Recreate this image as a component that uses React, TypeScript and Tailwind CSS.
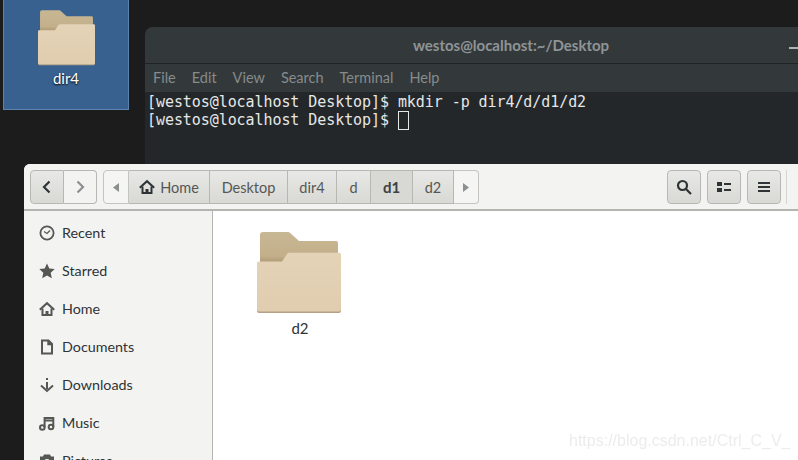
import { ReactNode } from 'react';

const MENU = ['File', 'Edit', 'View', 'Search', 'Terminal', 'Help'];

function Folder({ className }: { className: string }) {
  return (
    <svg viewBox="0 0 84 82" className={className}>
      <defs>
        <linearGradient id="back" x1="0" y1="0" x2="0" y2="1">
          <stop offset="0" stopColor="#c8b793" />
          <stop offset="0.75" stopColor="#c3b08b" />
          <stop offset="1" stopColor="#a8946f" />
        </linearGradient>
        <linearGradient id="front" x1="0" y1="0" x2="0" y2="1">
          <stop offset="0" stopColor="#e5d3b7" />
          <stop offset="1" stopColor="#e0cdb0" />
        </linearGradient>
      </defs>
      <path d="M3 3a3 3 0 0 1 3-3h25a3 3 0 0 1 2.200 1L42 9h37a2 2 0 0 1 2 2V32H3z" fill="url(#back)" />
      <path d="M2 81a2 2 0 0 1-2-2V32a2 2 0 0 1 2-2h23l4.500-7a3 3 0 0 1 2.500-1.500h50a2 2 0 0 1 2 2V79a2 2 0 0 1-2 2z" fill="#b3a285" />
      <path d="M2 79.500a2 2 0 0 1-2-2V31.500a2 2 0 0 1 2-2h23L30 22a3 3 0 0 1 2.500-1.300h49.500a2 2 0 0 1 2 2V77.500a2 2 0 0 1-2 2z" fill="url(#front)" />
    </svg>
  );
}

function Btn({ className, children }: { className: string; children: ReactNode }) {
  return <div className={`flex items-center justify-center h-[34px] border border-[#b8b8b3] bg-gradient-to-b from-[#e8e8e6] to-[#d8d8d5] text-[14.500px] text-[#2e3436] ${className}`}>{children}</div>;
}

function HomeIcon({ color }: { color: string }) {
  return (
    <svg viewBox="0 0 16 16" className="w-4 h-4" fill="none" stroke={color} strokeWidth="2">
      <path d="M0.800 8.800 8 2.200l7.200 6.600" />
      <path d="M3.500 7.500V14H12.500V7.500" />
      <path d="M6.500 14V10H9.500V14z" fill={color} strokeWidth="0" />
    </svg>
  );
}

const PLACES: { name: string; icon: ReactNode }[] = [
  {
    name: 'Recent',
    icon: (
      <svg viewBox="0 0 16 16" className="w-4 h-4" fill="none" stroke="#555753" strokeWidth="1.800">
        <circle cx="8" cy="8" r="6.600" />
        <path d="M5 6.500l3 2 3-3" strokeWidth="1.200" />
      </svg>
    ),
  },
  {
    name: 'Starred',
    icon: (
      <svg viewBox="0 0 16 16" className="w-4 h-4" fill="#555753">
        <path d="M8 .5l2.300 4.900 5.400.7-4 3.700 1.100 5.400L8 12.600l-4.800 2.600 1.100-5.400-4-3.700 5.400-.7z" />
      </svg>
    ),
  },
  { name: 'Home', icon: <HomeIcon color="#555753" /> },
  {
    name: 'Documents',
    icon: (
      <svg viewBox="0 0 16 16" className="w-4 h-4" fill="none" stroke="#555753" strokeWidth="2">
        <path d="M3 1.500h6.500L13 5v9.500H3z" />
        <path d="M9 1.500V5.500h4" fill="#555753" strokeWidth="1.400" />
      </svg>
    ),
  },
  {
    name: 'Downloads',
    icon: (
      <svg viewBox="0 0 16 16" className="w-4 h-4" fill="none" stroke="#555753" strokeWidth="2">
        <path d="M8 1v2M8 5v7" />
        <path d="M2 8.500 8 14l6-5.500" />
      </svg>
    ),
  },
  {
    name: 'Music',
    icon: (
      <svg viewBox="0 0 16 16" className="w-4 h-4" fill="none" stroke="#555753" strokeWidth="2">
        <circle cx="3.300" cy="12.500" r="2.300" />
        <circle cx="12" cy="12" r="2.300" />
        <path d="M5.600 12.500V3H14.300V12M5.600 5.500H14.300" />
      </svg>
    ),
  },
  {
    name: 'Pictures',
    icon: (
      <svg viewBox="0 0 16 16" className="w-4 h-4" fill="#555753">
        <path fillRule="evenodd" d="M5 1.500h6l1 2h3v11H1v-11h3zM8 6a3 3 0 1 0 0 6 3 3 0 0 0 0-6z" />
      </svg>
    ),
  },
];

export default function App() {
  return (
    <div className="relative w-[798px] h-[460px] overflow-hidden bg-[#1c1c1d] font-['Lato',sans-serif]">
      {/* desktop icon */}
      <div className="absolute left-[3px] top-[-1px] w-[126px] h-[111px] flex flex-col items-center bg-[#38618f] border border-[#5b83ad]">
        <Folder className="w-[57px] h-[56px] mt-[10px]" />
        <span className="mt-[2px] text-[15px] leading-5 text-white [text-shadow:0_1px_2px_#000]">dir4</span>
      </div>

      {/* terminal */}
      <div className="absolute left-[145px] top-[27px] w-[732px] h-[150px] flex flex-col rounded-t-lg bg-[#232729] overflow-hidden">
        <div className="relative h-[37px] flex items-center justify-center shrink-0 bg-[#33393b] border-b border-[#1f2324]">
          <span className="text-[15px] font-bold text-[#8f9496]">westos@localhost:~/Desktop</span>
          <span className="absolute left-[644px] top-[20px] w-[9px] h-[2px] bg-[#b0b3b4]" />
        </div>
        <div className="h-[28px] flex items-center gap-[16px] pl-[8px] shrink-0 bg-[#33393b] text-[14.500px] text-[#868b8c]">
          {MENU.map(m => <span key={m}>{m}</span>)}
        </div>
        <div className="pl-[2px] pt-[1px] font-['DejaVu_Sans_Mono',monospace] text-[15px] tracking-[-0.07px] leading-[18px] text-[#e6e8e8] whitespace-pre">
          <div>[westos@localhost Desktop]$ mkdir -p dir4/d/d1/d2</div>
          <div className="flex">
            <span>[westos@localhost Desktop]$ </span>
            <span className="w-[11px] h-[19px] border border-[#e6e8e8]" />
          </div>
        </div>
      </div>

      {/* files window */}
      <div className="absolute left-[24px] top-[164px] w-[780px] h-[300px] flex flex-col rounded-t-md overflow-hidden bg-white">
        <div className="h-[47px] shrink-0 flex items-center pl-[6px] pt-px bg-[#f3f3f2] border-b-2 border-[#b4b4b0]">
          <Btn className="w-[34px] rounded-l-[4px]">
            <svg viewBox="0 0 16 16" className="w-4 h-4" fill="none" stroke="#2e3436" strokeWidth="2.200"><path d="M10.500 2.500 5 8l5.500 5.500" /></svg>
          </Btn>
          <div className="w-[33px] h-[34px] flex items-center justify-center border border-l-0 border-[#b8b8b3] rounded-r-[4px] bg-[#f3f3f2]">
            <svg viewBox="0 0 16 16" className="w-4 h-4" fill="none" stroke="#8c8f90" strokeWidth="2.200"><path d="M5.500 2.500 11 8l-5.500 5.500" /></svg>
          </div>

          <div className="ml-[6px] w-[26px] h-[34px] flex items-center justify-center border border-[#c4c4c0] rounded-l-[4px] bg-[#f5f5f4]">
            <svg viewBox="0 0 8 12" className="w-[6px] h-[9px]" fill="#8c8f90"><path d="M8 0v12L0 6z" /></svg>
          </div>
          <Btn className="w-[81px] border-l-0 gap-[5px]">
            <HomeIcon color="#2e3436" />
            <span className="pt-px text-[#555753]">Home</span>
          </Btn>
          <Btn className="w-[78px] border-l-0"><span className="pt-px text-[#555753]">Desktop</span></Btn>
          <Btn className="w-[49px] border-l-0"><span className="pt-px text-[#555753]">dir4</span></Btn>
          <Btn className="w-[34px] border-l-0"><span className="pt-px text-[#555753]">d</span></Btn>
          <div className="w-[42px] h-[34px] flex items-center justify-center border border-l-0 border-[#b8b8b3] bg-[#d8d8d5] text-[15px] font-bold text-[#3c4143]">d1</div>
          <Btn className="w-[41px] border-l-0"><span className="pt-px text-[#555753]">d2</span></Btn>
          <div className="w-[25px] h-[34px] flex items-center justify-center border border-l-0 border-[#c4c4c0] rounded-r-[4px] bg-[#f5f5f4]">
            <svg viewBox="0 0 8 12" className="w-[6px] h-[9px]" fill="#8c8f90"><path d="M0 0v12l8-6z" /></svg>
          </div>

          <div className="flex-1" />
          <Btn className="w-[34px] rounded-[4px]">
            <svg viewBox="0 0 16 16" className="w-4 h-4" fill="none" stroke="#2e3436" strokeWidth="2.200"><circle cx="6.500" cy="6.500" r="4.500" /><path d="M10 10l5 5" /></svg>
          </Btn>
          <Btn className="ml-[6px] w-[34px] rounded-[4px]">
            <svg viewBox="0 0 16 16" className="w-4 h-4" fill="#2e3436"><path d="M1 3h5v4H1zM1 9h5v4H1zM8 4h7v2H8zM8 10h7v2H8z" /></svg>
          </Btn>
          <Btn className="ml-[6px] w-[34px] rounded-[4px]">
            <svg viewBox="0 0 16 16" className="w-4 h-4" fill="#2e3436"><path d="M2 3h12v2H2zM2 7h12v2H2zM2 11h12v2H2z" /></svg>
          </Btn>
          <div className="ml-[5px] mr-[17px] w-px h-[34px] bg-[#d4d4d0]" />
        </div>

        <div className="flex flex-1 min-h-0">
          <div className="w-[189px] shrink-0 flex flex-col pt-[3px] bg-[#f3f3f2] border-r border-[#b4b4b0]">
            {PLACES.map(p => (
              <div key={p.name} className="h-[38px] shrink-0 flex items-center gap-[6px] pl-[14px]">
                <span className="w-[18px] flex justify-center">{p.icon}</span>
                <span className="text-[14.300px] text-[#2e3436]">{p.name}</span>
              </div>
            ))}
          </div>
          <div className="flex-1 pl-[44px] pt-[21px]">
            <div className="w-[84px] flex flex-col items-center">
              <Folder className="w-[84px] h-[82px]" />
              <span className="mt-[4px] pl-[2px] text-[15px] leading-5 text-[#2e3436]">d2</span>
            </div>
          </div>
        </div>
      </div>

      {/* watermark */}
      <span className="absolute left-[569px] top-[431px] font-['Liberation_Sans',sans-serif] text-[16px] leading-5 text-[#ececec] blur-[0.4px]">https://blog.csdn.net/Ctrl_C_V_</span>
    </div>
  );
}
